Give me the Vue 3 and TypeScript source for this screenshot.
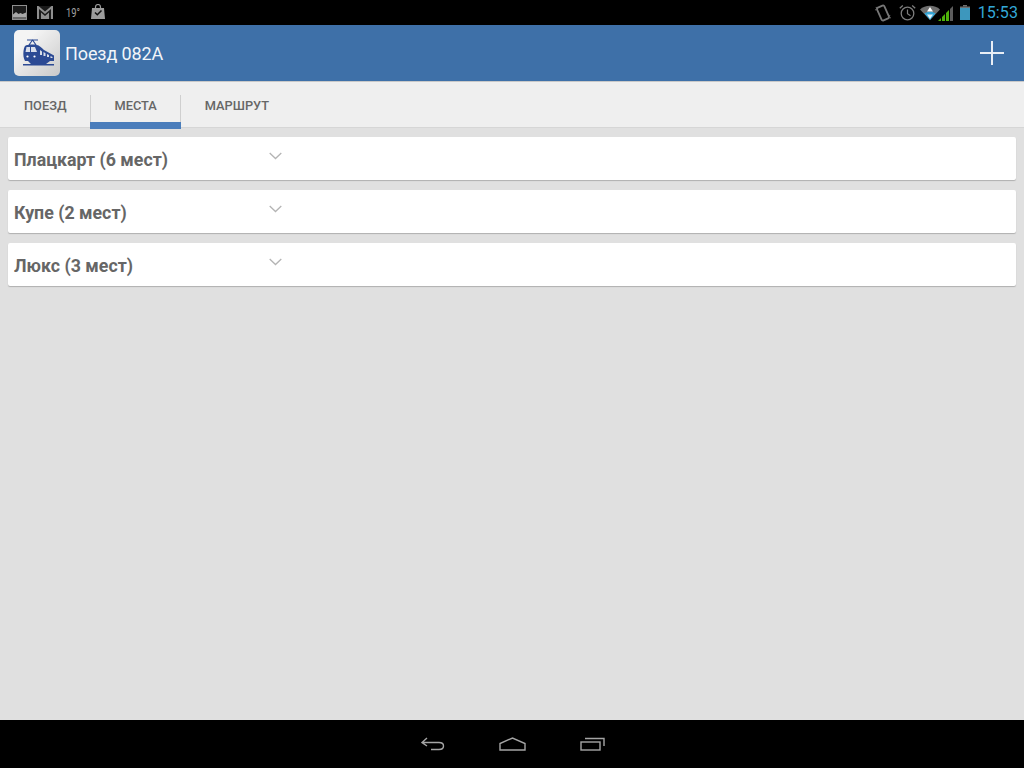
<script setup lang="ts">
import { ref } from "vue"

interface SeatGroup {
  id: number
  title: string
}

const activeTab = ref("МЕСТА")
const tabs = ["ПОЕЗД", "МЕСТА", "МАРШРУТ"]

const groups: SeatGroup[] = [
  { id: 1, title: "Плацкарт (6 мест)" },
  { id: 2, title: "Купе (2 мест)" },
  { id: 3, title: "Люкс (3 мест)" }
]
</script>

<template>
  <main class="screen">
    <header class="status-bar">
      <div class="status-left">
        <svg width="15" height="15" viewBox="0 0 15 15">
          <rect x="0.500" y="0.500" width="14" height="14" fill="#1c1c1c" stroke="#8f8f8f" />
          <path d="M1 12V9.500l3-2.500 2.500 2 2-1 2 1 3.500-1.500V12z" fill="#a8a8a8" />
          <rect x="1" y="12" width="13" height="2" fill="#6a6a6a" />
        </svg>
        <svg class="gmail" width="16" height="13" viewBox="0 0 16 13">
          <rect x="0" y="0" width="16" height="13" fill="#8f8f8f" />
          <path d="M2 13V3l6 5 6-5v10h-2V6.500L8 10 4 6.500V13z" fill="#1a1a1a" />
          <path d="M1.500 0 8 5.500 14.500 0z" fill="#1a1a1a" />
        </svg>
        <span class="temp">19°</span>
        <svg class="bag" width="14" height="15" viewBox="0 0 14 15">
          <path d="M4.500 4V3a2.500 2.500 0 0 1 5 0v1" fill="none" stroke="#9a9a9a" stroke-width="1.200" />
          <path d="M1 4h12l1 11H0z" fill="#9c9c9c" />
          <path d="M4 8.500l2.300 2.300L10.500 6.500" fill="none" stroke="#111" stroke-width="1.500" />
        </svg>
      </div>
      <div class="status-right">
        <svg width="16" height="18" viewBox="0 0 16 18">
          <rect x="4" y="2" width="8" height="14" rx="1.500" transform="rotate(-24 8 9)" fill="none" stroke="#777" stroke-width="1.800" />
          <path d="M1.500 3 0.500 7M14.500 11l1 4" stroke="#666" stroke-width="1.200" stroke-dasharray="1.200 1" />
        </svg>
        <svg class="alarm" width="17" height="17" viewBox="0 0 17 17">
          <circle cx="8.500" cy="9.500" r="6.300" fill="none" stroke="#7d7d7d" stroke-width="1.300" />
          <path d="M8.500 5.500v4.200l3 2" fill="none" stroke="#7d7d7d" stroke-width="1.200" />
          <path d="M0.800 4.200 3.800 1.400M16.200 4.200 13.200 1.400" stroke="#7d7d7d" stroke-width="1.300" />
        </svg>
        <svg class="wifi" width="20" height="15" viewBox="0 0 20 15">
          <path d="M0 4.500C5 -0.500 15 -0.500 20 4.500L10 15z" fill="#6f6f6f" />
          <path d="M4.500 8.500C7.500 6.300 12.500 6.300 15.500 8.500L10 15z" fill="#33a6d8" />
          <path d="M10 2 13 6.500H7z" fill="#fff" />
          <path d="M10 14 7 9.500h6z" fill="#fff" opacity="0.85" />
        </svg>
        <svg class="signal" width="16" height="16" viewBox="0 0 16 16">
          <path d="M0 16 3 13V16z" fill="#4fb30a" />
          <path d="M4 12 7 9V16H4z" fill="#4fb30a" />
          <path d="M8 8 11 5V16H8z" fill="#4fb30a" />
          <path d="M12 4 15 1V16H12z" fill="#5c5c5c" />
        </svg>
        <svg class="battery" width="10" height="15" viewBox="0 0 10 15">
          <rect x="3" y="0" width="4" height="1.500" fill="#6f6f6f" />
          <rect x="0" y="1.500" width="10" height="2" fill="#6f6f6f" />
          <rect x="0" y="3" width="10" height="12" fill="#3d97bd" />
        </svg>
        <span class="clock">15:53</span>
      </div>
    </header>

    <div class="action-bar">
      <div class="app-icon">
        <svg width="33" height="28" viewBox="0 0 33 28">
          <path d="M5 1h11M10.500 1 7 6h7z" fill="none" stroke="#2c4a94" stroke-width="1.100" />
          <path d="M5 6h9c3 0 5 2 8 5l10 5.500V22H3c-1.500-3-2-6-1.500-10C2 8 3 6 5 6z" fill="#2c4a94" />
          <path d="M4.500 8h3.500v5H3.500zM9 8h4l2 5H9z" fill="#d9deea" />
          <path d="M18 11l2 1.500V16h-2zM21.500 13l2 1.200V17h-2zM25 15l2 1v2h-2zM28.500 17l2 1v1h-2z" fill="#d9deea" />
          <circle cx="5.500" cy="17.500" r="1.100" fill="#fff" />
          <circle cx="12.500" cy="17.500" r="1.100" fill="#fff" />
          <path d="M1 25h31v1.500H1zM6 22h22l-4 3H9z" fill="#2c4a94" />
        </svg>
      </div>
      <span class="title">Поезд 082А</span>
      <svg class="add" width="24" height="24" viewBox="0 0 24 24">
        <path d="M12 0v24M0 12h24" stroke="#e9eef5" stroke-width="2" />
      </svg>
    </div>

    <nav class="tab-bar">
      <div
        v-for="tab in tabs"
        :key="tab"
        class="tab"
        :class="{ active: tab === activeTab }"
      >
        {{ tab }}
      </div>
    </nav>

    <section class="content">
      <div v-for="group in groups" :key="group.id" class="card">
        <span class="card-title">{{ group.title }}</span>
        <svg class="chevron" width="13" height="8" viewBox="0 0 13 8">
          <path d="M0.700 1 6.500 6.500 12.300 1" fill="none" stroke="#b4b4b4" stroke-width="1.300" />
        </svg>
      </div>
    </section>

    <footer class="nav-bar">
      <svg width="24" height="14" viewBox="0 0 24 14">
        <path d="M6 1 1 5.500 6 9M1 5.500h17c6 0 6 7 0 7h-8" fill="none" stroke="#a5a5a5" stroke-width="1.400" />
      </svg>
      <svg width="27" height="14" viewBox="0 0 27 14">
        <path d="M1 13V6.500L13.500 1 26 6.500V13z" fill="none" stroke="#a5a5a5" stroke-width="1.400" />
      </svg>
      <svg width="25" height="14" viewBox="0 0 25 14">
        <rect x="1" y="5" width="19" height="8" fill="none" stroke="#a5a5a5" stroke-width="1.400" />
        <path d="M5 1.500h19V9" fill="none" stroke="#a5a5a5" stroke-width="1.400" />
      </svg>
    </footer>
  </main>
</template>

<style>
html,
body {
  margin: 0;
  background: #e0e0e0;
}
</style>

<style scoped>
.screen {
  width: 1024px;
  height: 768px;
  display: flex;
  flex-direction: column;
  overflow: hidden;
  font-family: Roboto, "Liberation Sans", sans-serif;
  background: #e0e0e0;
}

.status-bar {
  height: 25px;
  flex: none;
  display: flex;
  justify-content: space-between;
  align-items: center;
  background: #000;
}

.status-left {
  display: flex;
  align-items: center;
  padding-left: 12px;
}

.gmail {
  margin-left: 10px;
}

.temp {
  margin-left: 13px;
  width: 13px;
  font-size: 13px;
  color: #a0a0a0;
  transform: scaleX(0.72);
  transform-origin: left;
}

.bag {
  margin-left: 12px;
  margin-top: -3px;
}

.status-right {
  display: flex;
  align-items: center;
  padding-right: 6px;
}

.alarm {
  margin-left: 8px;
}

.wifi {
  margin-left: 4px;
}

.signal {
  margin-left: -2px;
}

.battery {
  margin-left: 6px;
}

.clock {
  margin-left: 8px;
  font-size: 16px;
  color: #33a8d8;
  letter-spacing: 0.1px;
}

.action-bar {
  height: 56px;
  flex: none;
  display: flex;
  align-items: center;
  padding: 0 20px 0 14px;
  background: #3e70a8;
}

.app-icon {
  width: 46px;
  height: 46px;
  flex: none;
  display: flex;
  align-items: center;
  justify-content: center;
  border-radius: 5px;
  background: linear-gradient(135deg, #f4f4f4 25%, #c9c9c9);
}

.app-icon svg {
  margin-left: 2px;
}

.title {
  margin-left: 5px;
  font-size: 18px;
  letter-spacing: -0.1px;
  color: #f2f5f9;
}

.add {
  margin-left: auto;
}

.tab-bar {
  height: 47px;
  flex: none;
  box-sizing: border-box;
  display: flex;
  align-items: stretch;
  padding-top: 1px;
  background: #efefef;
  border-top: 1px solid #c9c9c9;
  border-bottom: 1px solid #d6d6d6;
}

.tab {
  position: relative;
  display: flex;
  align-items: center;
  justify-content: center;
  padding: 0 24px 2px;
  height: 46px;
  box-sizing: border-box;
  font-size: 12.8px;
  font-weight: 500;
  color: #666;
}

.tab.active {
  box-shadow: inset 0 -7px 0 #4a7dbb;
}

.tab.active::before,
.tab.active::after {
  content: "";
  position: absolute;
  top: 12px;
  width: 1px;
  height: 27px;
  background: #cfcfcf;
}

.tab.active::before {
  left: 0;
}

.tab.active::after {
  right: 0;
}

.content {
  flex: 1;
  display: flex;
  flex-direction: column;
  gap: 10px;
  padding: 9px 8px 0;
}

.card {
  height: 43px;
  flex: none;
  display: flex;
  align-items: center;
  position: relative;
  padding-left: 6px;
  padding-top: 1px;
  box-sizing: border-box;
  border-radius: 2px;
  background: #fff;
  box-shadow: 0 1px 1px rgba(0, 0, 0, 0.22);
}

.card-title {
  font-size: 17.8px;
  font-weight: 700;
  color: #666;
}

.chevron {
  position: absolute;
  left: 261px;
  top: 15px;
}

.nav-bar {
  height: 48px;
  flex: none;
  display: flex;
  align-items: center;
  justify-content: center;
  gap: 54px;
  padding-left: 2px;
  background: #000;
}
</style>
